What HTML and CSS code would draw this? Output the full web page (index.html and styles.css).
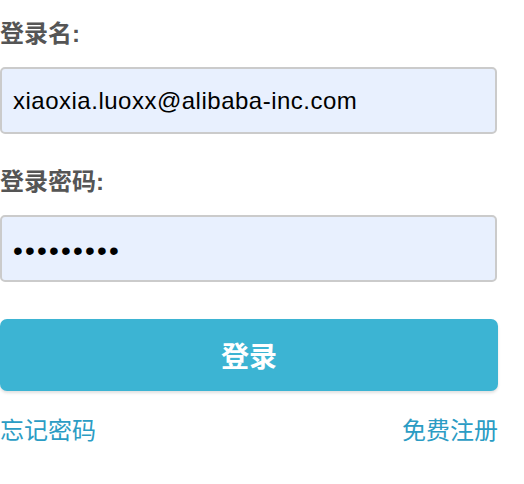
FILE: index.html
```html
<!DOCTYPE html>
<html lang="zh-CN">
<head>
<meta charset="utf-8">
<title>登录</title>
<link rel="stylesheet" href="styles.css">
</head>
<body>
<form class="login">
  <div class="field">
    <label class="label" for="user">登录名:</label>
    <input class="input" id="user" type="text" value="xiaoxia.luoxx@alibaba-inc.com">
  </div>
  <div class="field">
    <label class="label" for="pwd">登录密码:</label>
    <input class="input input-pwd" id="pwd" type="password" value="123456789">
  </div>
  <button class="submit" type="button">登录</button>
  <div class="links">
    <a class="link" href="#">忘记密码</a>
    <a class="link" href="#">免费注册</a>
  </div>
</form>
</body>
</html>
```
FILE: styles.css
```css
html, body {
  margin: 0;
  padding: 0;
  background: #fff;
}
body {
  font-family: "Liberation Sans", "Noto Sans CJK SC", sans-serif;
}
.login {
  width: 498px;
  padding-top: 20px;
  display: flex;
  flex-direction: column;
}
.field {
  display: flex;
  flex-direction: column;
  margin-bottom: 34px;
}
.label {
  font-size: 24px;
  line-height: 28px;
  font-weight: bold;
  color: #555;
  margin-bottom: 19px;
}
.input {
  box-sizing: border-box;
  width: 497px;
  height: 67px;
  border: 2px solid #cbcbcb;
  border-radius: 5px;
  background: #e8f0fe;
  padding: 0 11px;
  font-family: "Liberation Sans", sans-serif;
  font-size: 24px;
  letter-spacing: 0.5px;
  color: #000;
  outline: none;
}
.input-pwd {
  font-size: 28px;
  letter-spacing: 2.2px;
  padding-top: 4px;
}
.submit {
  margin-top: 3px;
  height: 72px;
  border: 0;
  border-radius: 7px;
  background: #3cb4d3;
  color: #fff;
  font-family: "Noto Sans CJK SC", sans-serif;
  font-weight: bold;
  font-size: 28px;
  box-shadow: 0 2px 3px rgba(0, 0, 0, 0.12);
  padding: 0;
}
.links {
  display: flex;
  justify-content: space-between;
  margin-top: 22px;
}
.link {
  font-family: "Noto Sans CJK SC", sans-serif;
  font-size: 24px;
  line-height: 32px;
  color: #2b9cc4;
  text-decoration: none;
}
```
